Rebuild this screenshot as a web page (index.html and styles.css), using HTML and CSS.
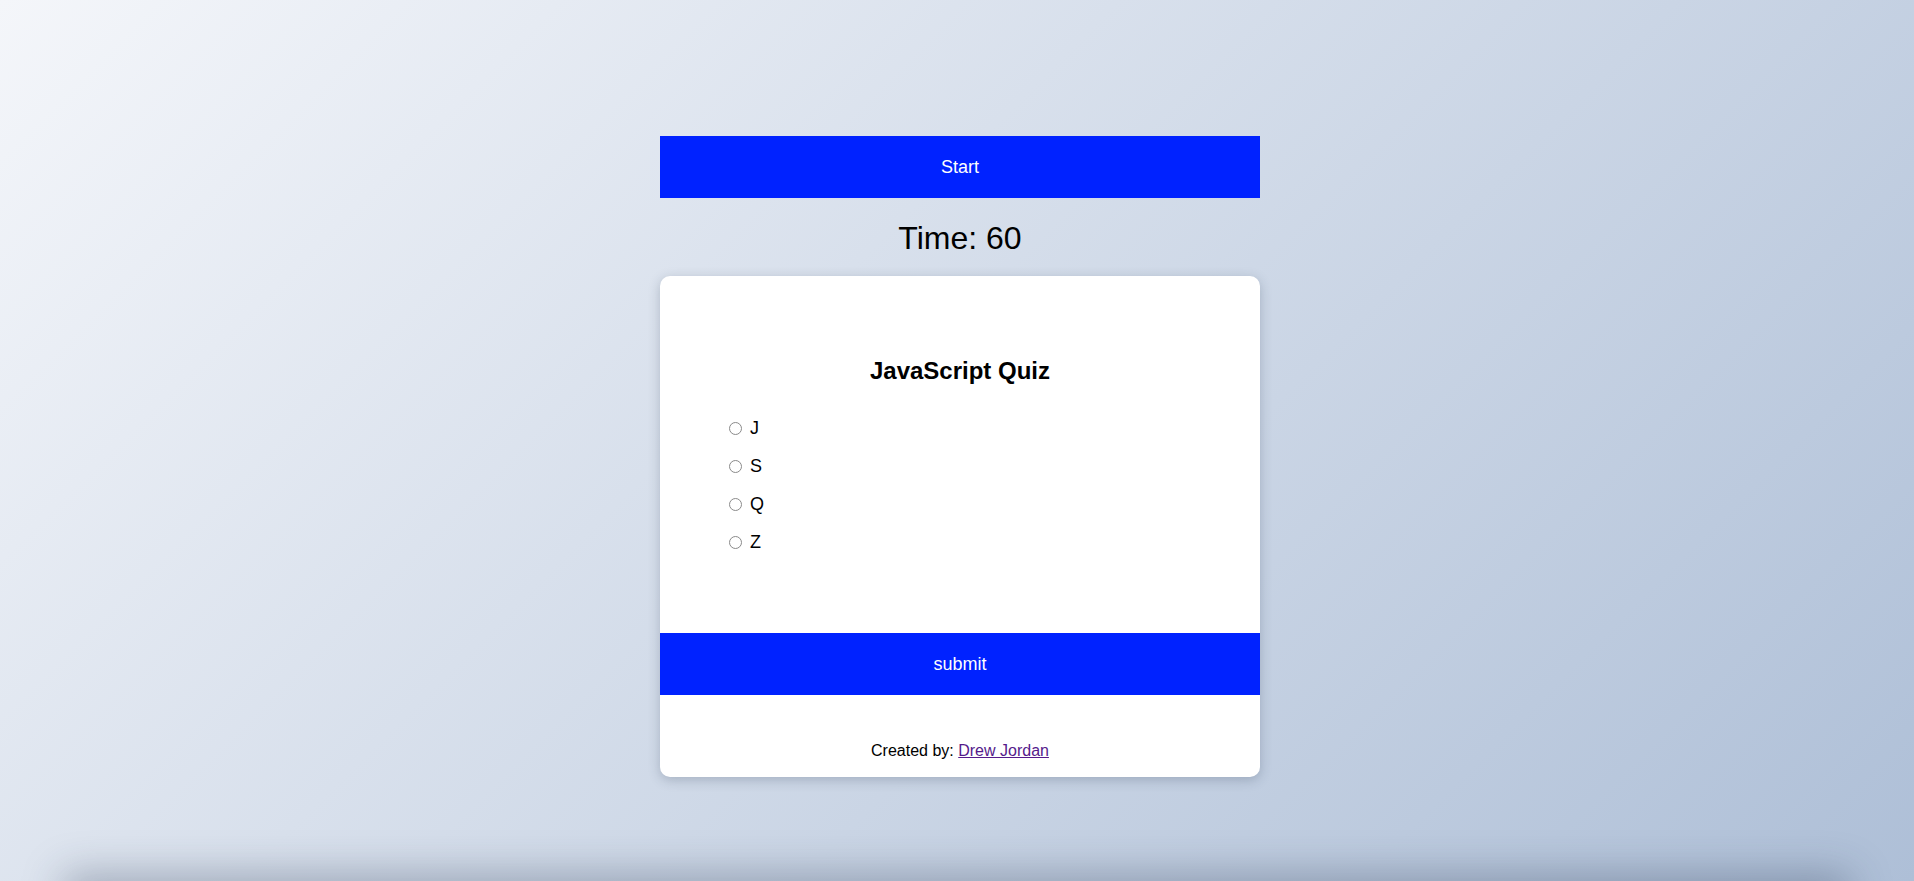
FILE: index.html
```html
<!DOCTYPE html>
<html lang="en">
<head>
    <meta charset="UTF-8">
    <meta name="viewport" content="width=device-width, initial-scale=1.0">
    <title>JavaScript Quiz</title>
    <link rel="stylesheet" href="styles.css">
</head>
<body>
    <div class="container">
        <button id="startBtn" class="quiz-btn start-btn">Start</button>

        <div class="timer" id="timer">Time: 60</div>

        <div class="quiz-card">
            <h2 class="quiz-title">JavaScript Quiz</h2>

            <form class="options" id="options">
                <label class="option"><input type="radio" name="answer" value="J"> J</label>
                <label class="option"><input type="radio" name="answer" value="S"> S</label>
                <label class="option"><input type="radio" name="answer" value="Q"> Q</label>
                <label class="option"><input type="radio" name="answer" value="Z"> Z</label>
            </form>

            <button id="submitBtn" class="quiz-btn submit-btn">submit</button>

            <footer class="credits">
                Created by: <a href="#">Drew Jordan</a>
            </footer>
        </div>
    </div>
</body>
</html>
```

FILE: styles.css
```css
* {
    box-sizing: border-box;
}

body {
    font-family: "Liberation Sans", Arial, Helvetica, sans-serif;
    margin: 0;
    padding: 0 0 0 6px;
    height: 100vh;
    overflow: hidden;
    background: linear-gradient(135deg, #f4f6fa 0%, #aebfd7 100%);
}

/* soft shadow along the bottom edge of the window */
body::after {
    content: '';
    position: fixed;
    left: 70px;
    right: 70px;
    bottom: -30px;
    height: 30px;
    box-shadow: 0 0 40px 6px rgba(40, 55, 80, 0.35);
}

.container {
    width: 600px;
    margin: 0 auto;
    padding-top: 136px;
    display: flex;
    flex-direction: column;
    align-items: stretch;
}

.quiz-btn {
    display: block;
    width: 100%;
    height: 62px;
    border: none;
    background: #0022ff;
    color: white;
    font-family: inherit;
    font-size: 18px;
    cursor: pointer;
}

.timer {
    margin: 22px 0 19px 0;
    text-align: center;
    font-size: 32px;
    line-height: 37px;
    color: #000;
}

.quiz-card {
    background: #fff;
    border-radius: 10px;
    overflow: hidden;
    height: 501px;
    padding-top: 81px;
    box-shadow: 0 3px 12px rgba(40, 55, 80, 0.25);
}

.quiz-title {
    margin: 0;
    text-align: center;
    font-size: 24px;
    line-height: 28px;
    font-weight: 700;
}

.options {
    margin: 24px 0 72px 0;
    padding-left: 69px;
    display: flex;
    flex-direction: column;
}

.option {
    display: flex;
    align-items: center;
    height: 38px;
    font-size: 18px;
    gap: 8px;
}

.option input {
    appearance: none;
    -webkit-appearance: none;
    margin: 0;
    width: 13px;
    height: 13px;
    border: 1px solid #8a8a8a;
    border-radius: 50%;
    background: #fff;
}

.option input:checked {
    background: radial-gradient(circle, #0022ff 0 3px, #fff 3.5px);
}

.credits {
    margin-top: 47px;
    text-align: center;
    font-size: 16px;
    line-height: 18px;
}

.credits a {
    color: #551a8b;
}
```
